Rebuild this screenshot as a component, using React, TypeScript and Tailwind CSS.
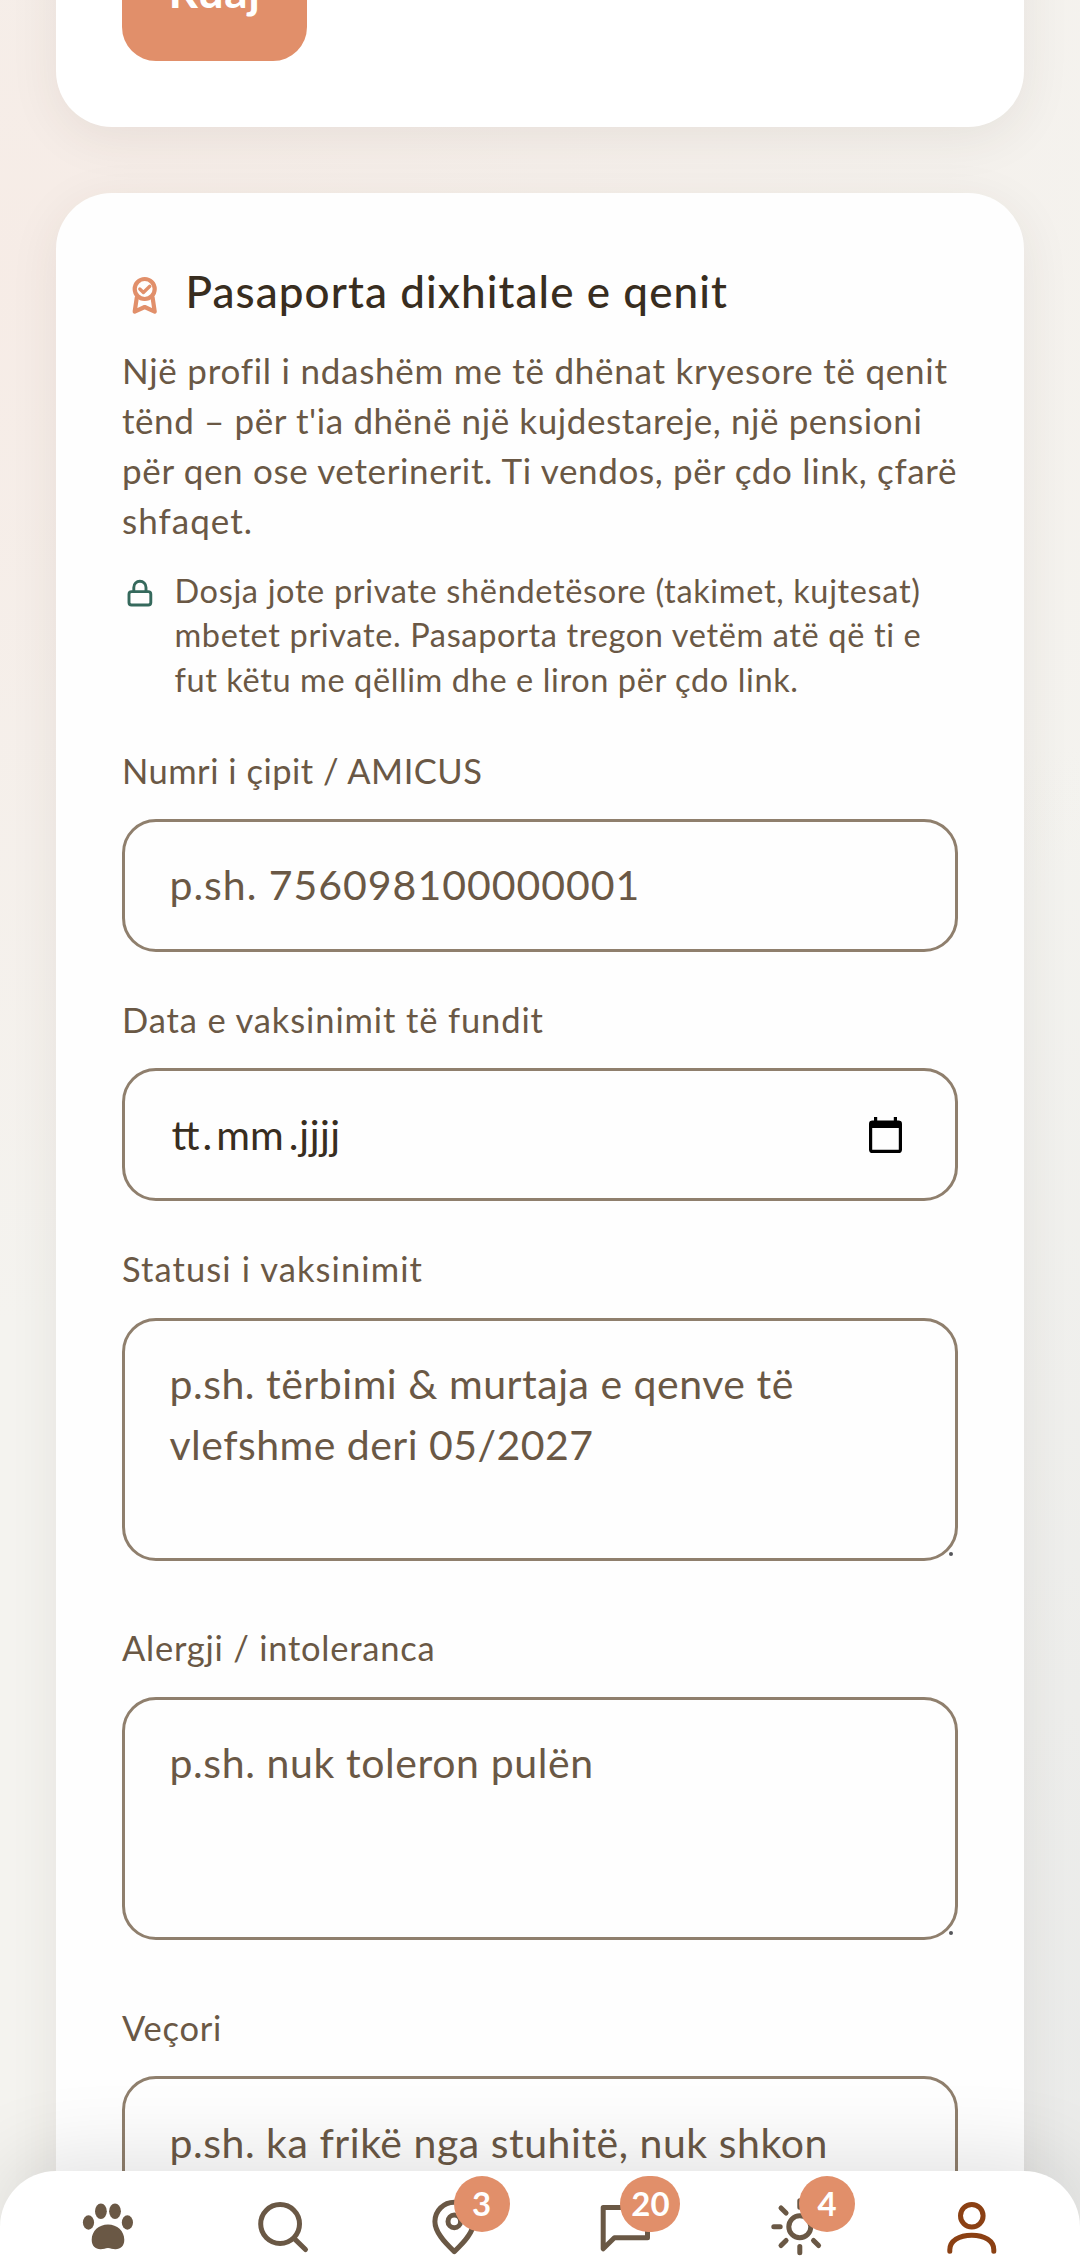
import type { ReactNode } from 'react'

type Line = { text: string; track: string }

const intro: Line[] = [
  { text: 'Një profil i ndashëm me të dhënat kryesore të qenit', track: 'tracking-[0.75px]' },
  { text: "tënd – për t'ia dhënë një kujdestareje, një pensioni", track: 'tracking-[0.6px]' },
  { text: 'për qen ose veterinerit. Ti vendos, për çdo link, çfarë', track: 'tracking-[0.66px]' },
  { text: 'shfaqet.', track: 'tracking-[1.05px]' },
]

const privacy: Line[] = [
  { text: 'Dosja jote private shëndetësore (takimet, kujtesat)', track: 'tracking-[0.65px]' },
  { text: 'mbetet private. Pasaporta tregon vetëm atë që ti e', track: 'tracking-[0.64px]' },
  { text: 'fut këtu me qëllim dhe e liron për çdo link.', track: 'tracking-[0.6px]' },
]

function Lines({ lines }: { lines: Line[] }) {
  return (
    <>
      {lines.map(line => (
        <span key={line.text} className={`block whitespace-nowrap ${line.track}`}>{line.text}</span>
      ))}
    </>
  )
}

function Label({ children, track }: { children: ReactNode; track: string }) {
  return (
    <label className={`block h-[50px] whitespace-nowrap pt-px text-[34.5px] leading-[50px] ${track}`}>
      {children}
    </label>
  )
}

function InputBox({ children }: { children: ReactNode }) {
  return (
    <div className="mt-[24.5px] mb-[42px] flex h-[132.75px] items-center justify-between rounded-[34px] border-[3px] border-[#8f7f6d] pr-[53px] pb-px pl-[44.5px] text-[41px] leading-[61px]">
      {children}
    </div>
  )
}

function TextareaBox({ lines }: { lines: Line[] }) {
  return (
    <div className="relative mt-[24.5px] mb-[61.5px] h-[243.25px] rounded-[34px] border-[3px] border-[#8f7f6d] pt-[32.5px] pl-[44.5px] text-[41px] leading-[61px]">
      <Lines lines={lines} />
      {/* Resize grip */}
      <span className="absolute right-[2.5px] bottom-[2px] h-[4px] w-[4px] rounded-full bg-[#55565a]" />
    </div>
  )
}

function NavItem({ label, badge, wide, children }: { label: string; badge?: string; wide?: boolean; children: ReactNode }) {
  return (
    <button className="flex justify-center" aria-label={label}>
      <span className="relative block h-[64px] w-[64px]">
        <svg className="h-[64px] w-[64px]" viewBox="0 0 64 64" fill="none" stroke="currentColor" strokeWidth="5" strokeLinecap="round" strokeLinejoin="round">
          {children}
        </svg>
        {badge && (
          <span
            className={`absolute -top-[18.5px] flex h-[56px] items-center justify-center rounded-full bg-[#e18f6a] pb-px text-[33px] leading-[55px] font-bold text-white ${wide ? 'left-[26px] w-[60px]' : 'left-[32px] w-[56px]'}`}
          >
            {badge}
          </span>
        )}
      </span>
    </button>
  )
}

export default function App() {
  return (
    <div
      className="relative h-[2268px] w-[1080px] overflow-hidden bg-[#f4f3ef] bg-[radial-gradient(ellipse_1300px_1050px_at_0%_12%,rgba(248,230,223,0.55),rgba(248,230,223,0)),radial-gradient(ellipse_700px_1300px_at_100%_90%,rgba(225,227,228,0.5),rgba(225,227,228,0))] text-[#6a5845]"
      style={{ fontFamily: 'Lato, "Noto Sans", sans-serif' }}
    >
      <main className="flex flex-col gap-[66px] px-[55.7px]">
        {/* Previous card */}
        <section className="-mt-[145px] h-[272px] shrink-0 rounded-[56px] bg-white px-[66.3px] pt-[67px] shadow-[0_11px_50px_rgba(62,52,44,0.08)]">
          <button className="h-[139px] w-[185px] rounded-[34px] bg-[#e18f6a] pb-[3px] text-[46px] leading-[61px] font-bold tracking-[0.6px] text-white">
            Ruaj
          </button>
        </section>

        {/* Passport */}
        <section className="h-[2300px] shrink-0 rounded-[56px] bg-[#fefefe] px-[66.3px] pt-[67px] shadow-[0_11px_50px_rgba(62,52,44,0.08)]">
          <h2 className="flex h-[60px] items-center text-[44px] leading-[60px] font-medium tracking-[1.08px] whitespace-nowrap text-[#382d20]">
            <svg className="mt-[11px] mr-[18px] ml-[0.5px] h-[45px] w-[45px] text-[#e18f6a]" viewBox="0 0 45 45" fill="none" stroke="currentColor" strokeWidth="4.200" strokeLinecap="round" strokeLinejoin="round">
              <circle cx="22.700" cy="16" r="10" />
              <path d="M17.800 16l3.600 3.500 6.400-6.200" strokeWidth="3.300" />
              <path d="M14.800 24.500L12.700 38.600l10-4.600 10 4.600-2.100-14.100" />
            </svg>
            <span className="pt-[2px]">Pasaporta dixhitale e qenit</span>
          </h2>

          <p className="mt-[25px] text-[35px] leading-[50px]">
            <Lines lines={intro} />
          </p>

          <div className="mt-[24px] flex text-[32.5px] leading-[44.4px]">
            <svg className="mt-[6.500px] mr-[18.500px] h-[34px] w-[34px] shrink-0 text-[#35695c]" viewBox="0 0 34 34" fill="none" stroke="currentColor" strokeWidth="2.900" strokeLinecap="round" strokeLinejoin="round">
              <rect x="7" y="15.600" width="21.800" height="13.400" rx="2.600" />
              <path d="M11.800 15.600v-4.200a6.100 6.100 0 0 1 12.200 0v4.200" />
            </svg>
            <p><Lines lines={privacy} /></p>
          </div>

          <form className="mt-[42.300px]">
            <Label track="tracking-[0.5px]">Numri i çipit / AMICUS</Label>
            <InputBox>
              <span className="tracking-[0.98px]">p.sh. 756098100000001</span>
            </InputBox>

            <Label track="tracking-[0.89px]">Data e vaksinimit të fundit</Label>
            <InputBox>
              <span className="flex pl-[2px] text-[#382d20]">
                <span>tt</span>
                <span className="pl-[3px]">.</span>
                <span className="pl-[4px]">mm</span>
                <span className="pl-[5px]">.</span>
                <span className="pl-[1px] tracking-[0.5px]">jjjj</span>
              </span>
              <svg className="mt-[1px] h-[36px] w-[33px]" viewBox="0 0 33 36" fill="none" stroke="#000" strokeWidth="3.2">
                <rect x="1.6" y="5" width="29.8" height="29.4" rx="2" />
                <path d="M0.8 7.6h31.4" strokeWidth="6.8" />
                <path d="M6.6 0v5M26.4 0v5" />
              </svg>
            </InputBox>

            <Label track="tracking-[1.1px]">Statusi i vaksinimit</Label>
            <TextareaBox
              lines={[
                { text: 'p.sh. tërbimi & murtaja e qenve të', track: 'tracking-[0.52px]' },
                { text: 'vlefshme deri 05/2027', track: 'tracking-[0.46px]' },
              ]}
            />

            <Label track="tracking-[0.76px]">Alergji / intoleranca</Label>
            <TextareaBox lines={[{ text: 'p.sh. nuk toleron pulën', track: 'tracking-[0.6px]' }]} />

            <Label track="tracking-[0.75px]">Veçori</Label>
            <TextareaBox lines={[{ text: 'p.sh. ka frikë nga stuhitë, nuk shkon', track: 'tracking-[0.53px]' }]} />
          </form>
        </section>
      </main>

      {/* Bottom navigation */}
      <nav className="absolute inset-x-0 bottom-0 grid h-[97.5px] grid-cols-6 rounded-t-[56px] bg-white px-[21.6px] pt-[24px] shadow-[0_-11px_84px_rgba(0,0,0,0.12)]">
        <NavItem label="Kreu">
          <g fill="currentColor" stroke="none">
            <ellipse cx="12.5" cy="27.5" rx="5.6" ry="7.2" />
            <ellipse cx="24.9" cy="16.2" rx="5.9" ry="7.7" />
            <ellipse cx="39" cy="16.2" rx="5.9" ry="7.7" />
            <ellipse cx="51.4" cy="27.5" rx="5.6" ry="7.2" />
            <path d="M32 29.5c9.2 0 16.3 6.5 16.3 15.2 0 6-3.6 9.500-8.800 9.500-3.600 0-4.600-1.300-7.500-1.300s-3.900 1.300-7.500 1.300c-5.200 0-8.800-3.500-8.800-9.500 0-8.700 7.100-15.200 16.300-15.200z" />
          </g>
        </NavItem>
        <NavItem label="Kërko">
          <circle cx="31.1" cy="29" r="19.4" />
          <path d="M45.3 43.6L56.5 54.5" />
        </NavItem>
        <NavItem label="Harta" badge="3">
          <path d="M32.3 56.6C22 47 12.9 37 12.9 26.6a19.4 19.4 0 0 1 38.8 0C51.7 37 42.6 47 32.3 56.600z" />
          <circle cx="32.3" cy="26.4" r="6.3" />
        </NavItem>
        <NavItem label="Mesazhe" badge="20" wide>
          <path d="M9.2 12.6h44.3v30.2H20.4L9.2 53.8z" />
        </NavItem>
        <NavItem label="Sot" badge="4">
          <circle cx="32.8" cy="31.8" r="11" />
          <path d="M32.8 5.8v6.4M32.8 51.4v6.4M6.8 31.8h6.4M52.4 31.8h6.4M14 13l5.1 5.1M46.5 45.5l5.1 5.1M14 50.600l5.100-5.100M46.500 18.100l5.100-5.100" />
        </NavItem>
        <NavItem label="Profili">
          <g className="text-[#8b4013]" stroke="currentColor">
            <circle cx="31.8" cy="20.8" r="11.3" />
            <path d="M9.8 56.2v-1.4C9.8 46 19 40.2 31.8 40.2S53.8 46 53.8 54.8v1.4" />
          </g>
        </NavItem>
      </nav>
    </div>
  )
}
